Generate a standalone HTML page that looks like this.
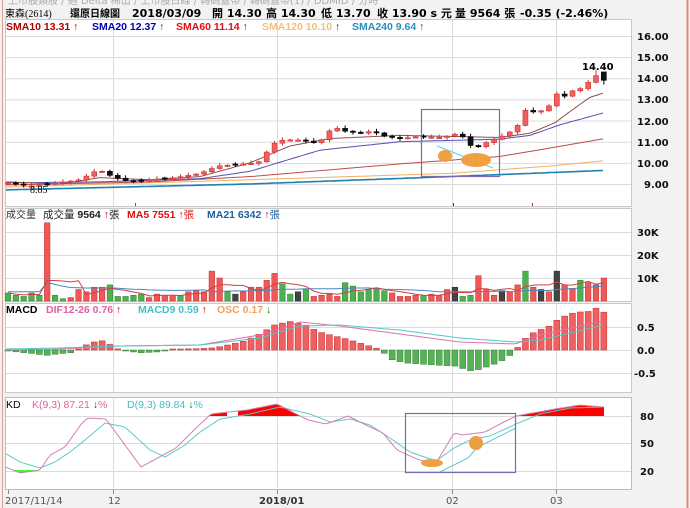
<!DOCTYPE html>
<html><head><meta charset="utf-8">
<style>
html,body{margin:0;padding:0;background:#f2f2f2;width:690px;height:508px;overflow:hidden}
svg{display:block}
text{font-family:"DejaVu Sans","Liberation Sans","Noto Sans CJK TC",sans-serif;font-weight:bold;font-size:10px}
.h{font-size:11px}
.n{font-weight:normal}
.lg{font-family:"Liberation Sans","Noto Sans CJK TC",sans-serif;font-size:10.5px}
</style></head><body>
<svg id="s" width="690" height="508" xmlns="http://www.w3.org/2000/svg">
<rect x="0" y="0" width="690" height="508" fill="#f2f2f2"/>
<line x1="2.5" y1="0" x2="2.5" y2="508" stroke="#d9a090" stroke-width="1"/>
<line x1="687.5" y1="0" x2="687.5" y2="508" stroke="#e8876a" stroke-width="2"/>
<text x="8" y="4" class="n" fill="#aaa" font-size="9">上市股類股 / 週 Delta 稀出 / 上市股日線 / 轉碼蓋帶 / 轉碼蓋帶(1) / DDMID / 分時</text>
<text x="5" y="17" class="n" font-size="12" fill="#000" style="font-family:'Liberation Serif','Noto Sans CJK TC',sans-serif">東森(2614)</text>
<text x="70" y="17" font-size="12" fill="#000" style="font-family:'Noto Sans CJK TC',sans-serif">還原日線圖</text>
<text x="132" y="17" class="h" fill="#000">2018/03/09</text>
<text x="212" y="17" class="h" fill="#000">開 14.30</text>
<text x="266" y="17" class="h" fill="#000">高 14.30</text>
<text x="321" y="17" class="h" fill="#000">低 13.70</text>
<text x="377" y="17" class="h" fill="#000">收 13.90 s 元</text>
<text x="455" y="17" class="h" fill="#000">量 9564 張</text>
<text x="520" y="17" class="h" fill="#000">-0.35 (-2.46%)</text>
<rect x="5.5" y="19.5" width="626" height="187" fill="#fff" stroke="#c8c8c8"/>
<rect x="5.5" y="208.5" width="626" height="93" fill="#fff" stroke="#c8c8c8"/>
<rect x="5.5" y="303.5" width="626" height="89" fill="#fff" stroke="#c8c8c8"/>
<rect x="5.5" y="397.5" width="626" height="92" fill="#fff" stroke="#d8a8d8"/>
<g id="grid" stroke="#dcdcdc" stroke-width="1"></g>
<g id="draw"></g>
<g class="lg">
<text class="lg" x="6" y="30" fill="#b00000">SMA10 13.31 <tspan fill="#d00000">↑</tspan></text>
<text class="lg" x="92" y="30" fill="#0000b8">SMA20 12.37 <tspan fill="#d00000">↑</tspan></text>
<text class="lg" x="176" y="30" fill="#e01010">SMA60 11.14 <tspan fill="#d00000">↑</tspan></text>
<text class="lg" x="262" y="30" fill="#f0c080">SMA120 10.10 <tspan fill="#d00000">↑</tspan></text>
<text class="lg" x="352" y="30" fill="#2890c0">SMA240 9.64 <tspan fill="#d00000">↑</tspan></text>
<text x="6" y="218" class="n" fill="#333" style="font-family:'Noto Sans CJK TC',sans-serif">成交量</text>
<text class="lg" x="43" y="218" fill="#222"><tspan class="n" style="font-family:'Noto Sans CJK TC',sans-serif">成交量</tspan> 9564 <tspan fill="#d00000">↑</tspan><tspan class="n">張</tspan></text>
<text class="lg" x="127" y="218" fill="#e01010">MA5 7551 <tspan fill="#d00000">↑</tspan><tspan class="n">張</tspan></text>
<text class="lg" x="207" y="218" fill="#1f60a0">MA21 6342 <tspan fill="#d00000">↑</tspan><tspan class="n">張</tspan></text>
<text class="lg" x="6" y="313" fill="#000">MACD</text>
<text class="lg" x="46" y="313" fill="#e060a0">DIF12-26 0.76 <tspan fill="#d00000">↑</tspan></text>
<text class="lg" x="138" y="313" fill="#40c0c8">MACD9 0.59 <tspan fill="#d00000">↑</tspan></text>
<text class="lg" x="217" y="313" fill="#f0a060">OSC 0.17 <tspan fill="#008000">↓</tspan></text>
<text class="lg n" x="6" y="408" fill="#000">KD</text>
<text class="lg n" x="32" y="408" fill="#e060a0">K(9,3) 87.21 <tspan fill="#008000" font-weight="bold">↓</tspan>%</text>
<text class="lg n" x="127" y="408" fill="#40c0c8">D(9,3) 89.84 <tspan fill="#008000" font-weight="bold">↓</tspan>%</text>
</g>
<g fill="#111">
<text x="637" y="40">16.00</text><text x="637" y="61">15.00</text><text x="637" y="82">14.00</text>
<text x="637" y="103">13.00</text><text x="637" y="125">12.00</text><text x="637" y="146">11.00</text>
<text x="637" y="167">10.00</text><text x="644" y="188">9.00</text>
<text x="637" y="236">30K</text><text x="637" y="259">20K</text><text x="637" y="282">10K</text>
<text x="637" y="331">0.5</text><text x="637" y="354">0.0</text><text x="634" y="377">-0.5</text>
<text x="640" y="420">80</text><text x="640" y="447">50</text><text x="640" y="475">20</text>
<text x="582" y="70" fill="#000">14.40</text>
<text x="30" y="193" class="n" style="font-family:'Liberation Serif',serif" font-size="11" fill="#000">8.85</text>
</g>
<g class="n" fill="#555">
<text x="5" y="504" class="n" font-size="9.5">2017/11/14</text>
<text x="108" y="504" class="n" font-size="9.5">12</text>
<text x="259" y="504" font-size="9.5" fill="#333">2018/01</text>
<text x="446" y="504" class="n" font-size="9.5">02</text>
<text x="550" y="504" class="n" font-size="9.5">03</text>
</g>
</svg>
<script>
(function(){
var NS="http://www.w3.org/2000/svg",g=document.getElementById('draw'),gr=document.getElementById('grid');
function el(t,a,p){var e=document.createElementNS(NS,t);for(var k in a)e.setAttribute(k,a[k]);(p||g).appendChild(e);return e;}
var PY=function(p){return 36+(16-p)*21.14;};
[16,15,14,13,12,11,10,9].forEach(function(p){el('line',{x1:6,x2:631,y1:PY(p)+.5,y2:PY(p)+.5},gr);});
[232,255,278].forEach(function(y){el('line',{x1:6,x2:631,y1:y+.5,y2:y+.5},gr);});
[327,350,373].forEach(function(y){el('line',{x1:6,x2:631,y1:y+.5,y2:y+.5},gr);});
[416,443,471].forEach(function(y){el('line',{x1:6,x2:631,y1:y+.5,y2:y+.5},gr);});
[113,277,452,556].forEach(function(x){
 [[20,206],[209,301],[304,392],[398,489]].forEach(function(r){el('line',{x1:x+.5,x2:x+.5,y1:r[0],y2:r[1]},gr);});
 el('line',{x1:x+.5,x2:x+.5,y1:490,y2:494,stroke:'#888'},gr);
});
el('line',{x1:8.5,x2:8.5,y1:490,y2:494,stroke:'#888'},gr);
function interp(pts,x){for(var i=0;i<pts.length-1;i++){if(x<=pts[i+1][0]){var a=pts[i],b=pts[i+1];return a[1]+(b[1]-a[1])*(x-a[0])/(b[0]-a[0]);}}return pts[pts.length-1][1];}
function poly(pts,fy,col,w){var d='';for(var x=6;x<=604;x+=3){d+=(d?'L':'M')+x+','+fy(interp(pts,x)).toFixed(1);}el('path',{d:d,fill:'none',stroke:col,'stroke-width':w||1});}
poly([[5,8.72],[250,9.0],[450,9.35],[604,9.64]],PY,'#2080b0',1.6);
poly([[5,8.85],[250,9.2],[450,9.5],[550,9.85],[604,10.1]],PY,'#f0b060',1);
poly([[5,8.95],[150,9.1],[250,9.35],[400,9.95],[500,10.3],[604,11.14]],PY,'#c04848',1);
poly([[5,9.05],[100,9.1],[200,9.25],[250,9.6],[320,10.6],[400,11.0],[500,11.12],[530,11.3],[560,11.8],[604,12.37]],PY,'#5050b0',1);
poly([[5,9.1],[60,9.0],[100,9.3],[150,9.2],[200,9.35],[250,10.0],[290,10.8],[330,11.15],[400,11.3],[500,11.2],[530,11.4],[555,11.9],[575,12.6],[590,13.1],[604,13.31]],PY,'#8b5050',1);
var kp=[[8,9.05],[30,8.9],[50,9.0],[80,9.2],[95,9.6],[103,9.6],[112,9.35],[130,9.1],[150,9.2],[175,9.3],[200,9.5],[218,9.85],[245,9.95],[258,10.0],[270,10.7],[277,11.05],[295,11.1],[310,11.0],[318,10.9],[333,11.7],[345,11.5],[360,11.4],[372,11.5],[385,11.25],[400,11.15],[420,11.25],[440,11.2],[452,11.3],[460,11.45],[467,10.9],[476,10.7],[488,11.0],[499,11.2],[508,11.4],[517,11.7],[524,12.5],[532,12.4],[547,12.5],[555,13.3],[563,13.1],[572,13.4],[580,13.5],[587,13.75],[595,14.15],[604,13.9]];
var N=77,prev=9.05;
for(var i=0;i<N;i++){var x=8+i*7.84,c=interp(kp,x),o=prev;
 if(i==N-1){o=14.3;}
 if(Math.abs(c-o)<0.04){o=c+((i%3)-1)*0.03;}
 var up=c>=o,hi=Math.max(o,c)+0.05+(i%4)*0.03,lo=Math.min(o,c)-0.05-(i%3)*0.03;
 if(i==N-1){hi=14.3;lo=13.7;} if(i==N-2){hi=14.4;}
 var col=up?'#f06060':'#111',sc=up?'#d03030':'#000';
 el('line',{x1:x,x2:x,y1:PY(hi),y2:PY(lo),stroke:sc});
 var yt=PY(Math.max(o,c)),h=Math.max(1.2,PY(Math.min(o,c))-yt);
 el('rect',{x:x-2.5,y:yt,width:5,height:h,fill:col,stroke:sc,'stroke-width':.6});
 prev=c;}
var V=[3.5,2.5,2,3.5,2.5,34,2.5,1,1.5,5,4,6,6,7,2,2,2.5,3,1.5,3,2.5,2.5,2.5,4,4.5,4,13,10,4,3,4,6,6,9,12,7.5,3,4,5,2,1,3,2,2.5,3,2,8,6.5,4,5,5.5,4.5,3.5,2,2,2.5,2.5,3,2.5,5,6,2,2.5,11,5,2.5,4.5,4,7,13,6,5,4,13,7,5.5,9,8,7,10];
var VC='GGGGGRGGRRRRRGGGGGRRRRGRRRRRGDRRRRRGGDGRDRRRRRGGGGGGRRRRGRRRDGGRRRDRRGRDRDRRG';
while(VC.length<V.length)VC+='R';
// keep spike at i=5, trim from middle
V.splice(40,V.length-77);VC=VC.slice(0,40)+VC.slice(40+(80-77));
var ma5=[],ma21=[];
for(var i=0;i<77;i++){var x=8+i*7.84,h=V[i]*2.3,t=VC[i]||'R',cc=t=='R'?'#f05858':t=='G'?'#50b050':'#444';
 el('rect',{x:x-2.8,y:301-h,width:5.6,height:h,fill:cc,stroke:t=='R'?'#c03030':t=='G'?'#308030':'#222','stroke-width':.5});
 var s=0,n=0;for(var j=Math.max(0,i-4);j<=i;j++){s+=V[j];n++;}ma5.push([x,301-s/n*2.3]);
 s=0;n=0;for(var j=Math.max(0,i-20);j<=i;j++){s+=V[j];n++;}ma21.push([x,301-Math.max(4,s/n)*2.3]);}
function pl(a,col,w){el('path',{d:'M'+a.map(function(p){return p[0].toFixed(1)+','+p[1].toFixed(1)}).join('L'),fill:'none',stroke:col,'stroke-width':w||1});}
pl(ma21,'#4a88c0');pl(ma5,'#d04040');
var M=[[8,-0.02],[20,-0.05],[35,-0.08],[45,-0.12],[60,-0.08],[75,-0.05],[85,0.1],[100,0.22],[110,0.12],[117,0.03],[125,-0.02],[140,-0.06],[160,-0.04],[175,0.02],[200,0.03],[215,0.05],[230,0.12],[245,0.2],[260,0.35],[275,0.55],[290,0.62],[305,0.55],[318,0.4],[330,0.33],[345,0.25],[360,0.15],[375,0.05],[382,-0.02],[390,-0.2],[405,-0.28],[430,-0.32],[455,-0.35],[470,-0.45],[480,-0.42],[495,-0.3],[505,-0.2],[515,-0.03],[522,0.2],[535,0.4],[548,0.5],[560,0.7],[575,0.82],[590,0.84],[597,0.92],[604,0.82]];
for(var i=0;i<77;i++){var x=8+i*7.84,v=interp(M,x),up=v>=0,h=Math.max(1,Math.abs(v)*46);
 el('rect',{x:x-3,y:up?350-h:350,width:6,height:h,fill:up?'#f06060':'#58b058',stroke:up?'#c03030':'#308030','stroke-width':.5});}
poly([[5,350],[60,349],[120,346],[200,345],[260,335],[300,322],[340,326],[400,334],[460,342],[515,344],[540,335],[604,321]],function(v){return v},'#e070a8',1);
poly([[5,349],[60,348],[120,346],[200,345],[260,338],[300,326],[340,325],[400,330],[460,338],[515,342],[540,340],[604,325]],function(v){return v},'#50c8c8',1);
var K=[[8,468],[20,473],[40,470],[50,455],[65,447],[82,423],[88,418],[106,419],[141,467],[176,448],[194,430],[211,414],[247,410],[277,404],[308,420],[326,424],[348,416],[366,425],[383,433],[397,450],[419,460],[436,463],[454,433],[463,435],[485,432],[500,424],[516,416],[555,409],[580,405],[604,407]];
var D=[[8,455],[20,462],[40,468],[55,462],[70,452],[85,440],[105,423],[125,427],[150,450],[165,457],[185,445],[200,432],[220,419],[250,414],[280,407],[310,414],[330,422],[350,419],[370,425],[390,438],[410,452],[436,461],[454,448],[470,440],[490,436],[516,424],[540,414],[570,408],[604,407]];
function area(pts,x1,x2,ybase,above){var d='M'+x1+','+ybase;for(var x=x1;x<=x2;x+=1){var y=interp(pts,x);y=above?Math.min(y,ybase):Math.max(y,ybase);d+='L'+x+','+y.toFixed(1);}d+='L'+x2+','+ybase+'Z';el('path',{d:d,fill:above?'#f00':'#30ff30'});}
area(K,194,227,416,true);area(K,238,308,416,true);area(K,340,356,416,true);area(K,518,604,416,true);area(K,8,44,470,false);
poly(D,function(v){return v},'#60c8c8',1);poly(K,function(v){return v},'#d080b0',1);
el('path',{d:'M440,472L468,458L475,450',fill:'none',stroke:'#60c8c8'});
el('path',{d:'M480,446L516,428',fill:'none',stroke:'#60c8c8'});
el('rect',{x:421.5,y:109.5,width:78,height:67,fill:'none',stroke:'#7070b0','stroke-width':1.2});
el('line',{x1:437,y1:146,x2:493,y2:168,stroke:'#60d0d8'});
el('ellipse',{cx:445,cy:156,rx:7,ry:6,fill:'#f0a040'});
el('ellipse',{cx:476,cy:160,rx:15,ry:7,fill:'#f0a040'});
el('rect',{x:405.5,y:413.5,width:110,height:59,fill:'none',stroke:'#7070b0','stroke-width':1.2});
el('ellipse',{cx:432,cy:463,rx:11,ry:4,fill:'#f0a040'});
el('ellipse',{cx:476,cy:443,rx:7,ry:7,fill:'#e8a040'});
el('line',{x1:453.5,x2:453.5,y1:203,y2:206,stroke:'#3030c0'});
el('line',{x1:532.5,x2:532.5,y1:203,y2:206,stroke:'#c03030'});
el('line',{x1:135.5,x2:135.5,y1:203,y2:206,stroke:'#c03030'});
})();
</script>
</body></html>
